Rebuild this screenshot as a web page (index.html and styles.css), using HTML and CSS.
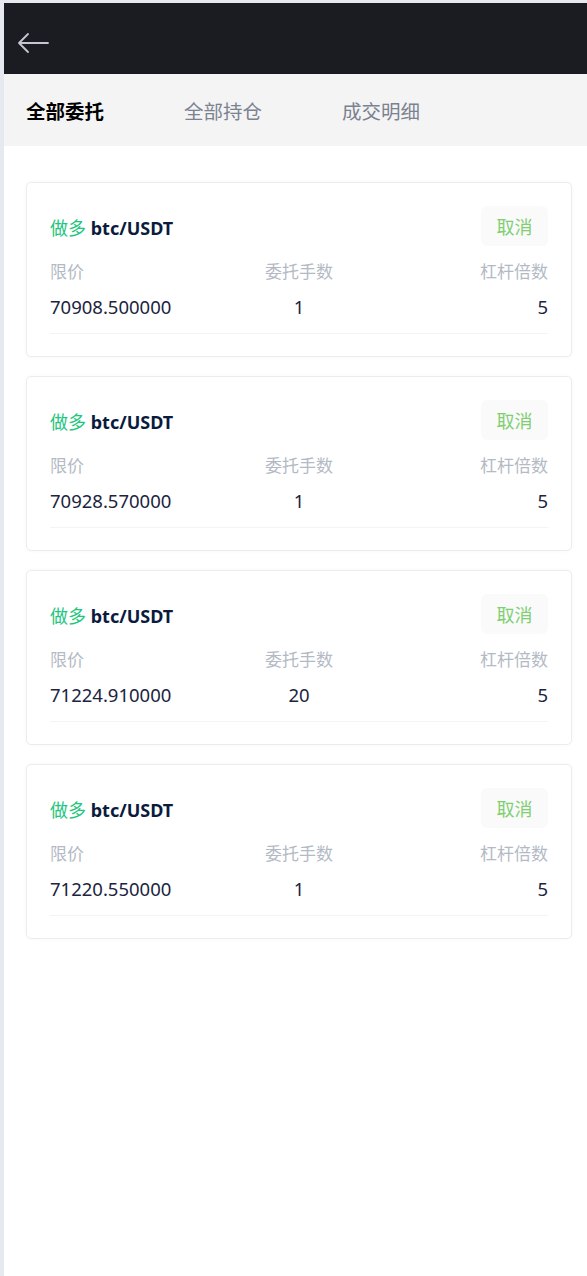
FILE: index.html
```html
<!DOCTYPE html>
<html lang="zh-CN">
<head>
<meta charset="utf-8">
<title>委托</title>
<link rel="stylesheet" href="styles.css">
</head>
<body>
<div class="page">
  <header class="topbar">
    <svg class="back" width="32" height="22" viewBox="0 0 32 22" fill="none" stroke="#c3c8d0" stroke-width="1.8" stroke-linecap="round" stroke-linejoin="round">
      <path d="M31 11H2M11 2L2 11L11 20"/>
    </svg>
  </header>
  <nav class="tabs">
    <div class="tab active">全部委托</div>
    <div class="tab">全部持仓</div>
    <div class="tab">成交明细</div>
  </nav>
  <main class="list">
    <section class="card">
      <div class="card-head">
        <div class="title"><span class="dir">做多</span> <span class="pair">btc/USDT</span></div>
        <button class="cancel">取消</button>
      </div>
      <div class="row labels"><span>限价</span><span>委托手数</span><span>杠杆倍数</span></div>
      <div class="row values"><span>70908.500000</span><span>1</span><span>5</span></div>
    </section>
    <section class="card">
      <div class="card-head">
        <div class="title"><span class="dir">做多</span> <span class="pair">btc/USDT</span></div>
        <button class="cancel">取消</button>
      </div>
      <div class="row labels"><span>限价</span><span>委托手数</span><span>杠杆倍数</span></div>
      <div class="row values"><span>70928.570000</span><span>1</span><span>5</span></div>
    </section>
    <section class="card">
      <div class="card-head">
        <div class="title"><span class="dir">做多</span> <span class="pair">btc/USDT</span></div>
        <button class="cancel">取消</button>
      </div>
      <div class="row labels"><span>限价</span><span>委托手数</span><span>杠杆倍数</span></div>
      <div class="row values"><span>71224.910000</span><span>20</span><span>5</span></div>
    </section>
    <section class="card">
      <div class="card-head">
        <div class="title"><span class="dir">做多</span> <span class="pair">btc/USDT</span></div>
        <button class="cancel">取消</button>
      </div>
      <div class="row labels"><span>限价</span><span>委托手数</span><span>杠杆倍数</span></div>
      <div class="row values"><span>71220.550000</span><span>1</span><span>5</span></div>
    </section>
  </main>
</div>
</body>
</html>
```
FILE: styles.css
```css
html, body {
  margin: 0;
  padding: 0;
  background: #e6eaf0;
}
body {
  font-family: "Noto Sans", "Noto Sans CJK SC", sans-serif;
}
.page {
  margin: 3px 0 0 4px;
  min-height: 1273px;
  background: #ffffff;
}
.topbar {
  height: 71px;
  background: #1b1c21;
  display: flex;
  align-items: center;
  padding-left: 13px;
}
.back {
  display: block;
  margin-top: 9px;
}
.tabs {
  height: 72px;
  background: #f4f4f4;
  display: flex;
  align-items: center;
  padding-left: 22px;
}
.tab {
  width: 158px;
  font-size: 19.5px;
  color: #7b8290;
  font-family: "Noto Sans CJK SC", sans-serif;
}
.tab.active {
  color: #000000;
  font-weight: 700;
}
.list {
  padding: 36px 15px 0 22px;
  display: flex;
  flex-direction: column;
  gap: 19px;
}
.card {
  border: 1px solid #ececee;
  border-radius: 5px;
  box-shadow: 0 0 4px rgba(0, 0, 0, 0.03);
  padding: 23px 23px 22px 23px;
  background: #fff;
}
.card-head {
  display: flex;
  justify-content: space-between;
  align-items: center;
  height: 40px;
}
.title {
  font-size: 18px;
  margin-top: 2px;
}
.dir {
  color: #1fc67e;
  font-family: "Noto Sans CJK SC", sans-serif;
}
.pair {
  color: #0a1b3d;
  font-weight: 700;
}
.cancel {
  border: none;
  background: #fafafa;
  border-radius: 6px;
  height: 40px;
  width: 67px;
  padding: 0;
  font-size: 18px;
  color: #80cf72;
  font-family: "Noto Sans CJK SC", sans-serif;
}
.row {
  display: grid;
  grid-template-columns: 1fr 1fr 1fr;
}
.row span:nth-child(2) { text-align: center; }
.row span:nth-child(3) { text-align: right; }
.labels {
  margin-top: 13px;
  line-height: 24px;
  font-size: 17px;
  color: #b3bac5;
  font-family: "Noto Sans CJK SC", sans-serif;
}
.values {
  margin-top: 11px;
  line-height: 26px;
  font-size: 18.5px;
  color: #1b2440;
  padding-bottom: 13px;
  border-bottom: 1px solid #f3f4f6;
}
```
